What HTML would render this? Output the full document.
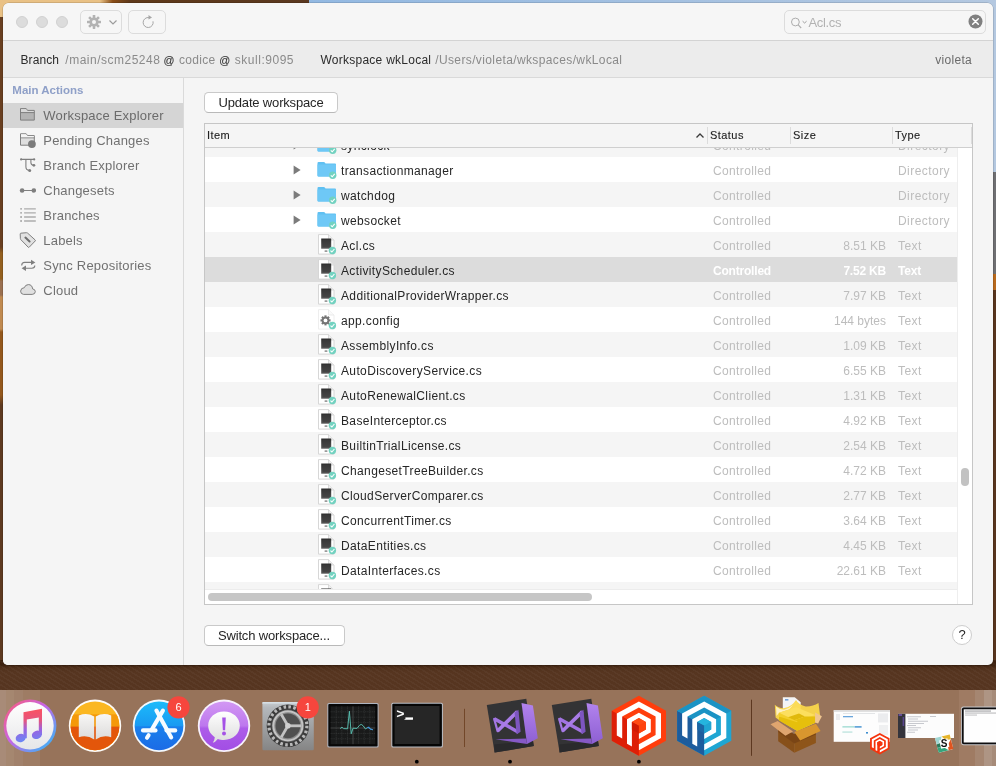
<!DOCTYPE html>
<html lang="en">
<head>
<meta charset="utf-8">
<title>Plastic SCM - Workspace Explorer</title>
<style>
*{box-sizing:border-box;margin:0;padding:0}
html,body{width:996px;height:766px;overflow:hidden}
body{position:relative;background:#5c3b21;font-family:"Liberation Sans",sans-serif;font-size:12px;color:#262626}
.abs{position:absolute}
/* desktop */
#desk div{position:absolute}
/* window */
#win{will-change:transform;position:absolute;left:3px;top:3px;width:990px;height:662px;background:#f5f5f5;border-radius:6px 6px 5px 5px;overflow:hidden;box-shadow:0 0 0 .5px rgba(0,0,0,.22)}
#titlebar{position:absolute;left:0;top:0;width:990px;height:37px;background:#f6f6f6}
#tdiv{position:absolute;left:0;top:37px;width:990px;height:1px;background:#d3d3d3}
#info{position:absolute;left:0;top:38px;width:990px;height:36px;background:#ececec}
#idiv{position:absolute;left:0;top:74px;width:990px;height:1px;background:#d9d9d9}
.tl{position:absolute;top:13px;width:12px;height:12px;border-radius:50%;background:#dcdcdc;border:1px solid #d1d1d1}
.tbtn{position:absolute;top:7px;height:24px;border:1px solid #dcdcdc;border-radius:5px;background:#f6f6f6}
#search{position:absolute;left:781px;top:7px;width:202px;height:24px;border:1px solid #dcdcdc;border-radius:5px;background:#f6f6f6}
#info span{position:absolute;top:0;line-height:38px;font-size:12px;white-space:nowrap}
.dk{color:#2b2b2b}.gy{color:#8a8a8a}.at{color:#3c3c3c;-webkit-text-stroke:.15px #3c3c3c}
/* sidebar */
#side{position:absolute;left:0;top:75px;width:180px;height:587px;background:#f5f5f5}
#sdiv{position:absolute;left:180px;top:75px;width:1px;height:587px;background:#dadada}
#side h4{position:absolute;left:9.3px;top:5px;font-size:11.5px;font-weight:bold;color:#8fa0c8;line-height:14px;letter-spacing:0}
.si{position:absolute;left:0;width:180px;height:25px;line-height:25px;font-size:13px;color:#717171;padding-left:40.3px;white-space:nowrap;letter-spacing:.2px}
.si.sel{background:#d5d5d5;color:#6b6b6b}
.si svg{position:absolute;left:15px;top:4px;width:18px;height:17px}
/* main */
.btn{position:absolute;height:21px;border:1px solid #c9c9c9;border-bottom-color:#b9b9b9;border-radius:4.5px;background:#fff;font-size:13px;line-height:20px;text-align:center;color:#262626;white-space:nowrap;letter-spacing:-.2px}
#table{position:absolute;left:201px;top:120px;width:769px;height:482px;border:1px solid #c6c6c6;background:#fff;overflow:hidden}
#thead{z-index:3;position:absolute;left:0;top:0;width:767px;height:24px;background:#f5f5f5;border-bottom:1px solid #cfcfcf}
#thead span{position:absolute;top:0;line-height:23px;font-size:11px;color:#1e1e1e;letter-spacing:.45px;-webkit-text-stroke:.12px #1e1e1e}
#thead i{position:absolute;top:3px;width:1px;height:17px;background:#dcdcdc}
.row{position:absolute;left:0;width:752px;height:25px;line-height:28px;font-size:12px;white-space:nowrap}
.row.alt{background:#f5f5f5}
.row.sel{background:#dcdcdc}
.row span{position:absolute;top:0;letter-spacing:.36px}
.nm{left:136px;color:#262626}
.st{left:508px;color:#bdbdbd}
.sz{right:71px;color:#bdbdbd;text-align:right;letter-spacing:0 !important}
.ty{left:693px;color:#bdbdbd;letter-spacing:.45px !important}
.row.sel .st,.row.sel .sz,.row.sel .ty{color:#fff;font-weight:bold;letter-spacing:-.2px !important}
.row svg{position:absolute}
.tri{left:88px;top:8px;width:8px;height:10px}
.fold{left:110.5px;top:3px;width:22px;height:20px}
.file{left:111px;top:2px;width:21px;height:21px}
/* dock */
#dock{will-change:transform;position:absolute;left:0;top:690px;width:996px;height:76px;background:#97735a}
#dock>svg{position:absolute;left:0;top:0}
</style>
</head>
<body>
<div id="desk">
  <div style="left:0;top:0;width:112px;height:20px;background:#e9c185"></div>
  <div style="left:100px;top:0;width:212px;height:8px;background:linear-gradient(90deg,#e9c185 0,#8a4e18 6%,#5e3819 14%,#5a3820 100%)"></div>
  <div style="left:309px;top:0;width:687px;height:176px;background:linear-gradient(90deg,#93b9e2,#b4c8e0)"></div>
  <div style="left:0;top:17px;width:10px;height:660px;background:linear-gradient(180deg,#693f20 0,#693f20 230px,#94601f 236px,#94601f 262px,#9a7050 264px,#9a7050 278px,#c08a50 280px,#c08a50 312px,#94581c 315px,#94581c 378px,#5e3a20 388px,#5e3a20 100%)"></div>
  <div style="left:986px;top:172px;width:10px;height:102px;background:#6f6f72"></div>
  <div style="left:986px;top:274px;width:10px;height:16px;background:#b8691d"></div>
  <div style="left:986px;top:290px;width:10px;height:380px;background:#58351e"></div>
  <div style="left:0;top:660px;width:996px;height:30px;background:repeating-linear-gradient(32deg,rgba(255,255,255,.03) 0,rgba(255,255,255,.03) 1.5px,rgba(0,0,0,0) 1.5px,rgba(0,0,0,0) 4px),linear-gradient(180deg,#3c210f 0,#3c210f 5px,#50301b 8px,#563520 12px,#563520 100%)"></div>
</div>

<div id="win">
  <div id="titlebar">
    <div class="tl" style="left:13px"></div><div class="tl" style="left:33px"></div><div class="tl" style="left:53px"></div>
    <div class="tbtn" style="left:77px;width:42px">
      <svg class="abs" style="left:5px;top:3px" width="16" height="16" viewBox="-8 -8 16 16"><g fill="#b3b3b3"><circle r="4.6"/><g id="t"><rect x="-1.3" y="-7" width="2.6" height="14" rx=".4"/><rect x="-7" y="-1.3" width="14" height="2.6" rx=".4"/></g><use href="#t" transform="rotate(45)"/></g><circle r="2" fill="#f6f6f6"/></svg>
      <svg class="abs" style="left:26.5px;top:7.6px" width="10" height="7" viewBox="0 0 10 7"><path d="M1.5 1.5 L5 5 L8.5 1.5" fill="none" stroke="#9c9c9c" stroke-width="1.2"/></svg>
    </div>
    <div class="tbtn" style="left:125px;width:38px">
      <svg class="abs" style="left:9.5px;top:1.6px" width="18" height="18" viewBox="0 0 18 18"><path d="M10.1 4.6 A5 5 0 1 0 14 8.3" fill="none" stroke="#a6a6a6" stroke-width="1"/><path d="M9.5 2 L13 4.5 L9.5 6.4 Z" fill="#a6a6a6"/></svg>
    </div>
    <div id="search">
      <svg class="abs" style="left:4.2px;top:3.6px" width="22" height="16" viewBox="0 0 22 16"><circle cx="6.4" cy="7" r="3.9" fill="none" stroke="#adadad" stroke-width="1"/><path d="M9.2 9.9 L12.2 13" stroke="#adadad" stroke-width="1.1"/><path d="M13.6 6.2 L15.6 8 L17.6 6.2" fill="none" stroke="#9f9f9f" stroke-width="1"/></svg>
      <span class="abs" style="left:23.4px;top:0;line-height:23px;font-size:13px;color:#b2b2b2;letter-spacing:-.3px">Acl.cs</span>
      <svg class="abs" style="left:182.5px;top:3.3px" width="15" height="15" viewBox="0 0 15 15"><circle cx="7.5" cy="7.5" r="7" fill="#808080"/><path d="M4.7 4.7 L10.3 10.3 M10.3 4.7 L4.7 10.3" stroke="#fff" stroke-width="1.5" stroke-linecap="round"/></svg>
    </div>
  </div>
  <div id="tdiv"></div>
  <div id="info">
    <span class="dk" style="left:17.5px;letter-spacing:.07px">Branch</span>
    <span class="gy" style="left:62.3px;letter-spacing:.5px">/main/scm25248</span>
    <span class="at" style="left:160.6px;font-size:10.8px">@</span>
    <span class="gy" style="left:176px;letter-spacing:.28px">codice</span>
    <span class="at" style="left:216.3px;font-size:10.8px">@</span>
    <span class="gy" style="left:231.8px;letter-spacing:.52px">skull:9095</span>
    <span class="dk" style="left:317.4px;letter-spacing:.26px">Workspace wkLocal</span>
    <span class="gy" style="left:432.2px;letter-spacing:.38px">/Users/violeta/wkspaces/wkLocal</span>
    <span style="left:932.3px;color:#6b6b6b;letter-spacing:.3px">violeta</span>
  </div>
  <div id="idiv"></div>

  <div id="side">
    <h4>Main Actions</h4>
    <div class="si sel" style="top:25px"><svg viewBox="0 0 18 17"><path d="M2.5 13.1 V1.6 H8.2 L9.6 3.4 H16.3 V13.1 Z" fill="#b3b3b3" stroke="#7f7f7f" stroke-width="1" stroke-linejoin="round"/><path d="M2.5 5.6 H16.3" stroke="#7f7f7f" stroke-width="1"/><path d="M3 2.1 H8 L9.4 3.9 H15.8 V5.1 H3 Z" fill="#f5f5f5" opacity=".55"/></svg>Workspace Explorer</div>
    <div class="si" style="top:50px"><svg viewBox="0 0 18 17"><path d="M2.5 13.2 V1.8 H8.2 L9.6 3.6 H16.3 V13.2 Z" fill="#dedede" stroke="#7f7f7f" stroke-width="1" stroke-linejoin="round"/><path d="M2.5 5.8 H16.3" stroke="#7f7f7f" stroke-width="1"/><path d="M3 2.3 H8 L9.4 4.1 H15.8 V5.3 H3 Z" fill="#f5f5f5"/><circle cx="13.9" cy="12.1" r="3.9" fill="#7b7b7b"/></svg>Pending Changes</div>
    <div class="si" style="top:75px"><svg viewBox="0 0 18 17"><g fill="none" stroke="#7f7f7f" stroke-width="1.1"><path d="M3.1 2.4 H16.2"/><path d="M7.9 2.4 V9.8 Q7.9 13.2 11.2 13.4"/><path d="M12.9 2.4 V5.6 Q12.9 8.1 15.4 8.3"/></g><g fill="#7f7f7f"><circle cx="3.1" cy="2.4" r="1.1"/><circle cx="16.2" cy="2.4" r="1.1"/><circle cx="11.7" cy="13.5" r="1.5"/><circle cx="15.9" cy="8.3" r="1.4"/></g></svg>Branch Explorer</div>
    <div class="si" style="top:100px"><svg viewBox="0 0 18 17"><path d="M4 8.5 H15.8" stroke="#7f7f7f" stroke-width="1.2"/><circle cx="4.1" cy="8.5" r="2.3" fill="#7f7f7f"/><circle cx="15.8" cy="8.5" r="2.3" fill="#7f7f7f"/></svg>Changesets</div>
    <div class="si" style="top:125px"><svg viewBox="0 0 18 17"><g stroke="#ababab" stroke-width="1.4"><path d="M6.1 1.9 H17.8"/><path d="M2.2 1.9 H4" stroke="#9c9c9c"/><path d="M6.1 5.9 H17.8"/><path d="M2.2 5.9 H4" stroke="#9c9c9c"/><path d="M6.1 10 H17.8"/><path d="M2.2 10 H4" stroke="#9c9c9c"/><path d="M6.1 14 H17.8"/><path d="M2.2 14 H4" stroke="#9c9c9c"/></g></svg>Branches</div>
    <div class="si" style="top:150px"><svg viewBox="0 0 18 17"><path d="M2.2 2 Q2.2 1.3 2.9 1.2 L8.6 0.7 Q9.2 0.7 9.7 1.2 L17.2 8 Q17.7 8.5 17.2 9 L11.2 15.2 Q10.7 15.7 10.2 15.2 L2.9 7.7 Q2.4 7.2 2.4 6.6 Z" fill="#e2e2e2" stroke="#7f7f7f" stroke-width="1" stroke-linejoin="round"/><path d="M7.4 5.6 L11.6 9.5" stroke="#6e6e6e" stroke-width="2" stroke-linecap="round"/></svg>Labels</div>
    <div class="si" style="top:175px"><svg viewBox="0 0 18 17"><g fill="none" stroke="#7f7f7f" stroke-width="1.1"><path d="M3.7 8.4 Q3.7 5.4 6.7 5.4 H14.5"/><path d="M16.8 8.6 Q16.8 11.3 13.8 11.3 H6.5"/></g><path d="M13 2.7 L17.4 5.4 L13 8.1 Z" fill="#7f7f7f"/><path d="M8 8.6 L3.6 11.3 L8 14 Z" fill="#7f7f7f"/></svg>Sync Repositories</div>
    <div class="si" style="top:200px"><svg viewBox="0 0 18 17"><path d="M5.6 12.4 H14.2 Q17.4 12.2 17.3 9.5 Q17.1 7.2 14.6 6.9 Q14.2 2.6 10.3 2.6 Q7.2 2.7 6.3 5.7 Q2.9 5.8 2.6 9.1 Q2.6 12.2 5.6 12.4 Z" fill="#e0e0e0" stroke="#7f7f7f" stroke-width="1"/></svg>Cloud</div>
  </div>
  <div id="sdiv"></div>

  <div class="btn" style="left:201px;top:89px;width:134px;letter-spacing:-.17px">Update workspace</div>

  <div id="table">
    <div id="thead">
      <span style="left:2px">Item</span>
      <svg class="abs" style="left:490px;top:8px" width="10" height="7" viewBox="0 0 10 7"><path d="M1.5 5.5 L5 2 L8.5 5.5" fill="none" stroke="#3a3a3a" stroke-width="1.3"/></svg>
      <i style="left:502px"></i><span style="left:505px">Status</span>
      <i style="left:585px"></i><span style="left:588px">Size</span>
      <i style="left:687px"></i><span style="left:690px">Type</span>
      <i style="left:766px"></i>
    </div>
    <div class="abs" style="left:0;top:0;width:767px;height:465px;overflow:hidden"><div class="row alt" style="top:8px"><svg class="tri" viewBox="0 0 8 10"><path d="M0.6 0.5 L7.6 5 L0.6 9.5 Z" fill="#7b7b7b"/></svg><svg class="fold" viewBox="0 0 22 20"><path d="M1.5 2.9 Q1.5 1.9 2.5 1.9 H7.6 Q8.4 1.9 8.9 2.6 L9.5 3.4 H19 Q20 3.4 20 4.4 V15.6 Q20 16.6 19 16.6 H2.5 Q1.5 16.6 1.5 15.6 Z" fill="#5fc0f2"/><path d="M1.5 4.6 H20 V15.6 Q20 16.6 19 16.6 H2.5 Q1.5 16.6 1.5 15.6 Z" fill="#6ec8f6"/><circle cx="16.7" cy="15.3" r="3.7" fill="#72d2c0"/><path d="M14.799999999999999 15.4 L16.2 16.8 L18.7 13.8" fill="none" stroke="#fff" stroke-width="1.1"/></svg><span class="nm">synclock</span><span class="st">Controlled</span><span class="ty">Directory</span></div>
      <div class="row " style="top:33px"><svg class="tri" viewBox="0 0 8 10"><path d="M0.6 0.5 L7.6 5 L0.6 9.5 Z" fill="#7b7b7b"/></svg><svg class="fold" viewBox="0 0 22 20"><path d="M1.5 2.9 Q1.5 1.9 2.5 1.9 H7.6 Q8.4 1.9 8.9 2.6 L9.5 3.4 H19 Q20 3.4 20 4.4 V15.6 Q20 16.6 19 16.6 H2.5 Q1.5 16.6 1.5 15.6 Z" fill="#5fc0f2"/><path d="M1.5 4.6 H20 V15.6 Q20 16.6 19 16.6 H2.5 Q1.5 16.6 1.5 15.6 Z" fill="#6ec8f6"/><circle cx="16.7" cy="15.3" r="3.7" fill="#72d2c0"/><path d="M14.799999999999999 15.4 L16.2 16.8 L18.7 13.8" fill="none" stroke="#fff" stroke-width="1.1"/></svg><span class="nm">transactionmanager</span><span class="st">Controlled</span><span class="ty">Directory</span></div>
      <div class="row alt" style="top:58px"><svg class="tri" viewBox="0 0 8 10"><path d="M0.6 0.5 L7.6 5 L0.6 9.5 Z" fill="#7b7b7b"/></svg><svg class="fold" viewBox="0 0 22 20"><path d="M1.5 2.9 Q1.5 1.9 2.5 1.9 H7.6 Q8.4 1.9 8.9 2.6 L9.5 3.4 H19 Q20 3.4 20 4.4 V15.6 Q20 16.6 19 16.6 H2.5 Q1.5 16.6 1.5 15.6 Z" fill="#5fc0f2"/><path d="M1.5 4.6 H20 V15.6 Q20 16.6 19 16.6 H2.5 Q1.5 16.6 1.5 15.6 Z" fill="#6ec8f6"/><circle cx="16.7" cy="15.3" r="3.7" fill="#72d2c0"/><path d="M14.799999999999999 15.4 L16.2 16.8 L18.7 13.8" fill="none" stroke="#fff" stroke-width="1.1"/></svg><span class="nm">watchdog</span><span class="st">Controlled</span><span class="ty">Directory</span></div>
      <div class="row " style="top:83px"><svg class="tri" viewBox="0 0 8 10"><path d="M0.6 0.5 L7.6 5 L0.6 9.5 Z" fill="#7b7b7b"/></svg><svg class="fold" viewBox="0 0 22 20"><path d="M1.5 2.9 Q1.5 1.9 2.5 1.9 H7.6 Q8.4 1.9 8.9 2.6 L9.5 3.4 H19 Q20 3.4 20 4.4 V15.6 Q20 16.6 19 16.6 H2.5 Q1.5 16.6 1.5 15.6 Z" fill="#5fc0f2"/><path d="M1.5 4.6 H20 V15.6 Q20 16.6 19 16.6 H2.5 Q1.5 16.6 1.5 15.6 Z" fill="#6ec8f6"/><circle cx="16.7" cy="15.3" r="3.7" fill="#72d2c0"/><path d="M14.799999999999999 15.4 L16.2 16.8 L18.7 13.8" fill="none" stroke="#fff" stroke-width="1.1"/></svg><span class="nm">websocket</span><span class="st">Controlled</span><span class="ty">Directory</span></div>
      <div class="row alt" style="top:108px"><svg class="file" viewBox="0 0 21 21"><defs><linearGradient id="sq" x1="0" y1="0" x2="0" y2="1"><stop offset="0" stop-color="#2e2e2e"/><stop offset="1" stop-color="#5a5a5a"/></linearGradient></defs><path d="M2.5 0.6 H12.5 L18 6 V20.1 H2.5 Z" fill="#fff" stroke="#d2d2d2" stroke-width=".9"/><path d="M12.5 0.6 V6 H18" fill="#f0f0f0" stroke="#d2d2d2" stroke-width=".8"/><rect x="5.2" y="4.5" width="10" height="10.2" fill="url(#sq)"/><rect x="6.6" y="5.8" width="7.2" height="7.4" fill="#3c3c3c" opacity=".6"/><rect x="8.5" y="16.3" width="3" height="1.6" rx=".6" fill="#9a9a9a"/><circle cx="16.4" cy="16.5" r="3.7" fill="#72d2c0"/><path d="M14.499999999999998 16.6 L15.899999999999999 18.0 L18.4 15.0" fill="none" stroke="#fff" stroke-width="1.1"/></svg><span class="nm">Acl.cs</span><span class="st">Controlled</span><span class="sz">8.51 KB</span><span class="ty">Text</span></div>
      <div class="row sel" style="top:133px"><svg class="file" viewBox="0 0 21 21"><path d="M2.5 0.6 H12.5 L18 6 V20.1 H2.5 Z" fill="#fff" stroke="#d2d2d2" stroke-width=".9"/><path d="M12.5 0.6 V6 H18" fill="#f0f0f0" stroke="#d2d2d2" stroke-width=".8"/><rect x="5.2" y="4.5" width="10" height="10.2" fill="url(#sq)"/><rect x="6.6" y="5.8" width="7.2" height="7.4" fill="#3c3c3c" opacity=".6"/><rect x="8.5" y="16.3" width="3" height="1.6" rx=".6" fill="#9a9a9a"/><circle cx="16.4" cy="16.5" r="3.7" fill="#72d2c0"/><path d="M14.499999999999998 16.6 L15.899999999999999 18.0 L18.4 15.0" fill="none" stroke="#fff" stroke-width="1.1"/></svg><span class="nm">ActivityScheduler.cs</span><span class="st">Controlled</span><span class="sz">7.52 KB</span><span class="ty">Text</span></div>
      <div class="row alt" style="top:158px"><svg class="file" viewBox="0 0 21 21"><path d="M2.5 0.6 H12.5 L18 6 V20.1 H2.5 Z" fill="#fff" stroke="#d2d2d2" stroke-width=".9"/><path d="M12.5 0.6 V6 H18" fill="#f0f0f0" stroke="#d2d2d2" stroke-width=".8"/><rect x="5.2" y="4.5" width="10" height="10.2" fill="url(#sq)"/><rect x="6.6" y="5.8" width="7.2" height="7.4" fill="#3c3c3c" opacity=".6"/><rect x="8.5" y="16.3" width="3" height="1.6" rx=".6" fill="#9a9a9a"/><circle cx="16.4" cy="16.5" r="3.7" fill="#72d2c0"/><path d="M14.499999999999998 16.6 L15.899999999999999 18.0 L18.4 15.0" fill="none" stroke="#fff" stroke-width="1.1"/></svg><span class="nm">AdditionalProviderWrapper.cs</span><span class="st">Controlled</span><span class="sz">7.97 KB</span><span class="ty">Text</span></div>
      <div class="row " style="top:183px"><svg class="file" viewBox="0 0 21 21"><path d="M2.5 0.6 H12.5 L18 6 V20.1 H2.5 Z" fill="#fff" stroke="#ececec" stroke-width=".9"/><path d="M12.5 0.6 V6 H18" fill="#fafafa" stroke="#e6e6e6" stroke-width=".8"/><g transform="translate(9.5 11.4)"><g fill="#757575"><circle r="3.7"/><g id="g2"><rect x="-1.1" y="-5" width="2.2" height="10"/><rect x="-5" y="-1.1" width="10" height="2.2"/></g><use href="#g2" transform="rotate(45)"/></g><circle r="1.9" fill="#fff"/></g><circle cx="16.4" cy="16.5" r="3.7" fill="#72d2c0"/><path d="M14.499999999999998 16.6 L15.899999999999999 18.0 L18.4 15.0" fill="none" stroke="#fff" stroke-width="1.1"/></svg><span class="nm">app.config</span><span class="st">Controlled</span><span class="sz">144 bytes</span><span class="ty">Text</span></div>
      <div class="row alt" style="top:208px"><svg class="file" viewBox="0 0 21 21"><path d="M2.5 0.6 H12.5 L18 6 V20.1 H2.5 Z" fill="#fff" stroke="#d2d2d2" stroke-width=".9"/><path d="M12.5 0.6 V6 H18" fill="#f0f0f0" stroke="#d2d2d2" stroke-width=".8"/><rect x="5.2" y="4.5" width="10" height="10.2" fill="url(#sq)"/><rect x="6.6" y="5.8" width="7.2" height="7.4" fill="#3c3c3c" opacity=".6"/><rect x="8.5" y="16.3" width="3" height="1.6" rx=".6" fill="#9a9a9a"/><circle cx="16.4" cy="16.5" r="3.7" fill="#72d2c0"/><path d="M14.499999999999998 16.6 L15.899999999999999 18.0 L18.4 15.0" fill="none" stroke="#fff" stroke-width="1.1"/></svg><span class="nm">AssemblyInfo.cs</span><span class="st">Controlled</span><span class="sz">1.09 KB</span><span class="ty">Text</span></div>
      <div class="row " style="top:233px"><svg class="file" viewBox="0 0 21 21"><path d="M2.5 0.6 H12.5 L18 6 V20.1 H2.5 Z" fill="#fff" stroke="#d2d2d2" stroke-width=".9"/><path d="M12.5 0.6 V6 H18" fill="#f0f0f0" stroke="#d2d2d2" stroke-width=".8"/><rect x="5.2" y="4.5" width="10" height="10.2" fill="url(#sq)"/><rect x="6.6" y="5.8" width="7.2" height="7.4" fill="#3c3c3c" opacity=".6"/><rect x="8.5" y="16.3" width="3" height="1.6" rx=".6" fill="#9a9a9a"/><circle cx="16.4" cy="16.5" r="3.7" fill="#72d2c0"/><path d="M14.499999999999998 16.6 L15.899999999999999 18.0 L18.4 15.0" fill="none" stroke="#fff" stroke-width="1.1"/></svg><span class="nm">AutoDiscoveryService.cs</span><span class="st">Controlled</span><span class="sz">6.55 KB</span><span class="ty">Text</span></div>
      <div class="row alt" style="top:258px"><svg class="file" viewBox="0 0 21 21"><path d="M2.5 0.6 H12.5 L18 6 V20.1 H2.5 Z" fill="#fff" stroke="#d2d2d2" stroke-width=".9"/><path d="M12.5 0.6 V6 H18" fill="#f0f0f0" stroke="#d2d2d2" stroke-width=".8"/><rect x="5.2" y="4.5" width="10" height="10.2" fill="url(#sq)"/><rect x="6.6" y="5.8" width="7.2" height="7.4" fill="#3c3c3c" opacity=".6"/><rect x="8.5" y="16.3" width="3" height="1.6" rx=".6" fill="#9a9a9a"/><circle cx="16.4" cy="16.5" r="3.7" fill="#72d2c0"/><path d="M14.499999999999998 16.6 L15.899999999999999 18.0 L18.4 15.0" fill="none" stroke="#fff" stroke-width="1.1"/></svg><span class="nm">AutoRenewalClient.cs</span><span class="st">Controlled</span><span class="sz">1.31 KB</span><span class="ty">Text</span></div>
      <div class="row " style="top:283px"><svg class="file" viewBox="0 0 21 21"><path d="M2.5 0.6 H12.5 L18 6 V20.1 H2.5 Z" fill="#fff" stroke="#d2d2d2" stroke-width=".9"/><path d="M12.5 0.6 V6 H18" fill="#f0f0f0" stroke="#d2d2d2" stroke-width=".8"/><rect x="5.2" y="4.5" width="10" height="10.2" fill="url(#sq)"/><rect x="6.6" y="5.8" width="7.2" height="7.4" fill="#3c3c3c" opacity=".6"/><rect x="8.5" y="16.3" width="3" height="1.6" rx=".6" fill="#9a9a9a"/><circle cx="16.4" cy="16.5" r="3.7" fill="#72d2c0"/><path d="M14.499999999999998 16.6 L15.899999999999999 18.0 L18.4 15.0" fill="none" stroke="#fff" stroke-width="1.1"/></svg><span class="nm">BaseInterceptor.cs</span><span class="st">Controlled</span><span class="sz">4.92 KB</span><span class="ty">Text</span></div>
      <div class="row alt" style="top:308px"><svg class="file" viewBox="0 0 21 21"><path d="M2.5 0.6 H12.5 L18 6 V20.1 H2.5 Z" fill="#fff" stroke="#d2d2d2" stroke-width=".9"/><path d="M12.5 0.6 V6 H18" fill="#f0f0f0" stroke="#d2d2d2" stroke-width=".8"/><rect x="5.2" y="4.5" width="10" height="10.2" fill="url(#sq)"/><rect x="6.6" y="5.8" width="7.2" height="7.4" fill="#3c3c3c" opacity=".6"/><rect x="8.5" y="16.3" width="3" height="1.6" rx=".6" fill="#9a9a9a"/><circle cx="16.4" cy="16.5" r="3.7" fill="#72d2c0"/><path d="M14.499999999999998 16.6 L15.899999999999999 18.0 L18.4 15.0" fill="none" stroke="#fff" stroke-width="1.1"/></svg><span class="nm">BuiltinTrialLicense.cs</span><span class="st">Controlled</span><span class="sz">2.54 KB</span><span class="ty">Text</span></div>
      <div class="row " style="top:333px"><svg class="file" viewBox="0 0 21 21"><path d="M2.5 0.6 H12.5 L18 6 V20.1 H2.5 Z" fill="#fff" stroke="#d2d2d2" stroke-width=".9"/><path d="M12.5 0.6 V6 H18" fill="#f0f0f0" stroke="#d2d2d2" stroke-width=".8"/><rect x="5.2" y="4.5" width="10" height="10.2" fill="url(#sq)"/><rect x="6.6" y="5.8" width="7.2" height="7.4" fill="#3c3c3c" opacity=".6"/><rect x="8.5" y="16.3" width="3" height="1.6" rx=".6" fill="#9a9a9a"/><circle cx="16.4" cy="16.5" r="3.7" fill="#72d2c0"/><path d="M14.499999999999998 16.6 L15.899999999999999 18.0 L18.4 15.0" fill="none" stroke="#fff" stroke-width="1.1"/></svg><span class="nm">ChangesetTreeBuilder.cs</span><span class="st">Controlled</span><span class="sz">4.72 KB</span><span class="ty">Text</span></div>
      <div class="row alt" style="top:358px"><svg class="file" viewBox="0 0 21 21"><path d="M2.5 0.6 H12.5 L18 6 V20.1 H2.5 Z" fill="#fff" stroke="#d2d2d2" stroke-width=".9"/><path d="M12.5 0.6 V6 H18" fill="#f0f0f0" stroke="#d2d2d2" stroke-width=".8"/><rect x="5.2" y="4.5" width="10" height="10.2" fill="url(#sq)"/><rect x="6.6" y="5.8" width="7.2" height="7.4" fill="#3c3c3c" opacity=".6"/><rect x="8.5" y="16.3" width="3" height="1.6" rx=".6" fill="#9a9a9a"/><circle cx="16.4" cy="16.5" r="3.7" fill="#72d2c0"/><path d="M14.499999999999998 16.6 L15.899999999999999 18.0 L18.4 15.0" fill="none" stroke="#fff" stroke-width="1.1"/></svg><span class="nm">CloudServerComparer.cs</span><span class="st">Controlled</span><span class="sz">2.77 KB</span><span class="ty">Text</span></div>
      <div class="row " style="top:383px"><svg class="file" viewBox="0 0 21 21"><path d="M2.5 0.6 H12.5 L18 6 V20.1 H2.5 Z" fill="#fff" stroke="#d2d2d2" stroke-width=".9"/><path d="M12.5 0.6 V6 H18" fill="#f0f0f0" stroke="#d2d2d2" stroke-width=".8"/><rect x="5.2" y="4.5" width="10" height="10.2" fill="url(#sq)"/><rect x="6.6" y="5.8" width="7.2" height="7.4" fill="#3c3c3c" opacity=".6"/><rect x="8.5" y="16.3" width="3" height="1.6" rx=".6" fill="#9a9a9a"/><circle cx="16.4" cy="16.5" r="3.7" fill="#72d2c0"/><path d="M14.499999999999998 16.6 L15.899999999999999 18.0 L18.4 15.0" fill="none" stroke="#fff" stroke-width="1.1"/></svg><span class="nm">ConcurrentTimer.cs</span><span class="st">Controlled</span><span class="sz">3.64 KB</span><span class="ty">Text</span></div>
      <div class="row alt" style="top:408px"><svg class="file" viewBox="0 0 21 21"><path d="M2.5 0.6 H12.5 L18 6 V20.1 H2.5 Z" fill="#fff" stroke="#d2d2d2" stroke-width=".9"/><path d="M12.5 0.6 V6 H18" fill="#f0f0f0" stroke="#d2d2d2" stroke-width=".8"/><rect x="5.2" y="4.5" width="10" height="10.2" fill="url(#sq)"/><rect x="6.6" y="5.8" width="7.2" height="7.4" fill="#3c3c3c" opacity=".6"/><rect x="8.5" y="16.3" width="3" height="1.6" rx=".6" fill="#9a9a9a"/><circle cx="16.4" cy="16.5" r="3.7" fill="#72d2c0"/><path d="M14.499999999999998 16.6 L15.899999999999999 18.0 L18.4 15.0" fill="none" stroke="#fff" stroke-width="1.1"/></svg><span class="nm">DataEntities.cs</span><span class="st">Controlled</span><span class="sz">4.45 KB</span><span class="ty">Text</span></div>
      <div class="row " style="top:433px"><svg class="file" viewBox="0 0 21 21"><path d="M2.5 0.6 H12.5 L18 6 V20.1 H2.5 Z" fill="#fff" stroke="#d2d2d2" stroke-width=".9"/><path d="M12.5 0.6 V6 H18" fill="#f0f0f0" stroke="#d2d2d2" stroke-width=".8"/><rect x="5.2" y="4.5" width="10" height="10.2" fill="url(#sq)"/><rect x="6.6" y="5.8" width="7.2" height="7.4" fill="#3c3c3c" opacity=".6"/><rect x="8.5" y="16.3" width="3" height="1.6" rx=".6" fill="#9a9a9a"/><circle cx="16.4" cy="16.5" r="3.7" fill="#72d2c0"/><path d="M14.499999999999998 16.6 L15.899999999999999 18.0 L18.4 15.0" fill="none" stroke="#fff" stroke-width="1.1"/></svg><span class="nm">DataInterfaces.cs</span><span class="st">Controlled</span><span class="sz">22.61 KB</span><span class="ty">Text</span></div>
      <div class="row alt" style="top:458px"><svg class="file" viewBox="0 0 21 21"><path d="M2.5 0.6 H12.5 L18 6 V20.1 H2.5 Z" fill="#fff" stroke="#d2d2d2" stroke-width=".9"/><path d="M12.5 0.6 V6 H18" fill="#f0f0f0" stroke="#d2d2d2" stroke-width=".8"/><rect x="5.2" y="4.5" width="10" height="10.2" fill="url(#sq)"/><rect x="6.6" y="5.8" width="7.2" height="7.4" fill="#3c3c3c" opacity=".6"/><rect x="8.5" y="16.3" width="3" height="1.6" rx=".6" fill="#9a9a9a"/><circle cx="16.4" cy="16.5" r="3.7" fill="#72d2c0"/><path d="M14.499999999999998 16.6 L15.899999999999999 18.0 L18.4 15.0" fill="none" stroke="#fff" stroke-width="1.1"/></svg><span class="nm">DataObjects.cs</span><span class="st">Controlled</span><span class="sz">3.10 KB</span><span class="ty">Text</span></div></div>
    <div class="abs" style="left:0;top:465px;width:767px;height:15px;background:#fff;border-top:1px solid #ececec"></div>
    <div class="abs" style="left:752px;top:24px;width:15px;height:456px;background:#fff;border-left:1px solid #eeeeee"></div>
    <div class="abs" style="left:3px;top:469px;width:384px;height:8px;border-radius:4px;background:#c6c6c6"></div>
    <div class="abs" style="left:756px;top:344px;width:8px;height:18px;border-radius:4px;background:#c2c2c2"></div>
  </div>

  <div class="btn" style="left:201px;top:622px;width:141px;letter-spacing:-.15px;padding-right:1.2px">Switch workspace...</div>
  <div class="abs" style="left:949px;top:622px;width:20px;height:20px;border-radius:50%;background:#fff;border:1px solid #cdcdcd;font-size:13px;line-height:18px;text-align:center;color:#262626">?</div>
</div>

<div id="dock">
<svg width="996" height="76" viewBox="0 0 996 76" font-family="Liberation Sans, sans-serif">
<defs>
  <linearGradient id="itr" x1="0" y1="0" x2="1" y2="1"><stop offset="0" stop-color="#ff5b6e"/><stop offset=".45" stop-color="#c765e6"/><stop offset="1" stop-color="#1fc3fa"/></linearGradient>
  <linearGradient id="itd" x1="0" y1="0" x2="0" y2="1"><stop offset="0" stop-color="#ffffff"/><stop offset="1" stop-color="#e6e6e8"/></linearGradient>
  <linearGradient id="itn" gradientUnits="userSpaceOnUse" x1="30" y1="19" x2="30" y2="52"><stop offset="0" stop-color="#fb5160"/><stop offset=".35" stop-color="#e4557f"/><stop offset=".62" stop-color="#9b62e0"/><stop offset="1" stop-color="#6a86f5"/></linearGradient>
  <linearGradient id="asb" x1="0" y1="0" x2="0" y2="1"><stop offset="0" stop-color="#1cbbfa"/><stop offset=".5" stop-color="#199af2"/><stop offset=".52" stop-color="#1a80ec"/><stop offset="1" stop-color="#1c6be6"/></linearGradient>
  <linearGradient id="fbp" x1="0" y1="0" x2="0" y2="1"><stop offset="0" stop-color="#d298f3"/><stop offset=".5" stop-color="#bd77ee"/><stop offset=".55" stop-color="#ad5ce9"/><stop offset="1" stop-color="#a24ee4"/></linearGradient>
  <linearGradient id="fbb" x1="0" y1="0" x2="0" y2="1"><stop offset="0" stop-color="#ffffff"/><stop offset="1" stop-color="#dcdcdc"/></linearGradient>
  <linearGradient id="spg" x1="0" y1="0" x2="0" y2="1"><stop offset="0" stop-color="#c7ccd1"/><stop offset=".12" stop-color="#b4b8bc"/><stop offset="1" stop-color="#858585"/></linearGradient>
  <linearGradient id="vsp" x1="0" y1="0" x2="0" y2="1"><stop offset="0" stop-color="#b283ee"/><stop offset="1" stop-color="#8d5fd2"/></linearGradient>
  <linearGradient id="bkp" x1="0" y1="0" x2="0" y2="1"><stop offset="0" stop-color="#f7f6f5"/><stop offset="1" stop-color="#dcdbda"/></linearGradient>
  <clipPath id="bkc"><circle cx="95" cy="35.8" r="24.4"/></clipPath>
</defs>
<!-- dock background bands -->
<rect x="0" y="0" width="6" height="76" fill="#a88b78"/><rect x="6" y="0" width="8" height="76" fill="#a58770"/><rect x="14" y="0" width="9" height="76" fill="#a1816b"/><rect x="23" y="0" width="17" height="76" fill="#9e7c64"/>
<rect x="959" y="0" width="16" height="76" fill="#9f7b63"/><rect x="975" y="0" width="9" height="76" fill="#a58671"/><rect x="984" y="0" width="8" height="76" fill="#ae9584"/><rect x="992" y="0" width="4" height="76" fill="#a68b79"/>

<!-- iTunes -->
<circle cx="30" cy="35.8" r="26.4" fill="url(#itr)"/>
<circle cx="30" cy="35.8" r="23.7" fill="url(#itd)"/>
<g fill="url(#itn)"><path d="M23.5 22.3 L42 18.8 V45 H38.8 V27.4 L26.8 29.6 V48.2 H23.5 Z"/><ellipse cx="20.7" cy="48" rx="5.1" ry="4.1" transform="rotate(-18 20.7 48)"/><ellipse cx="36.9" cy="44.8" rx="5.1" ry="4.1" transform="rotate(-18 36.9 44.8)"/></g>

<!-- Books -->
<circle cx="95" cy="35.8" r="26.2" fill="#fdfbf8"/>
<g clip-path="url(#bkc)"><rect x="68" y="9" width="54" height="54" fill="#fbb721"/><rect x="68" y="24.4" width="54" height="40" fill="#f4990a"/><rect x="68" y="36.6" width="54" height="30" fill="#e3560a"/></g>
<path d="M78.8 25.4 Q87 22.4 94.2 26.4 V49.4 Q87 44.6 78.8 47.2 Z" fill="url(#bkp)"/><path d="M95.8 26.4 Q103 22.4 111.2 25.4 V47.2 Q103 44.6 95.8 49.4 Z" fill="url(#bkp)"/>


<!-- App Store -->
<circle cx="159" cy="35.8" r="26.2" fill="#f4f9fd"/>
<circle cx="159" cy="35.8" r="24.4" fill="url(#asb)"/>
<g stroke="#f7fbff" stroke-width="4.1" stroke-linecap="round" fill="none"><path d="M162.9 20.6 L151.4 40.2"/><path d="M148.6 45.2 L147 47.8"/><path d="M156.4 20.6 L171.2 47.4"/><path d="M143 40.4 H155.5"/><path d="M166.5 40.4 H175.2"/></g>
<circle cx="178.5" cy="17.3" r="11.1" fill="#f6463d"/>
<text x="178.5" y="21.2" font-size="11" fill="#fff" text-anchor="middle">6</text>

<!-- Feedback -->
<circle cx="224" cy="35.8" r="26.2" fill="#f8f2fc"/>
<circle cx="224" cy="35.8" r="24.4" fill="url(#fbp)"/>
<path d="M224 21.4 C233 21.4 239.8 27.6 239.8 35.6 C239.8 43.8 233 50 224 50 C221.6 50 219.6 49.6 217.8 48.9 Q215.4 52 212.8 52.8 Q214.6 50.4 214.8 47.2 C210.6 44.6 208.2 40.4 208.2 35.6 C208.2 27.6 215 21.4 224 21.4 Z" fill="url(#fbb)"/>
<path d="M222.2 27.4 H225.8 L225.1 40.2 H222.9 Z" fill="#a552e6"/><circle cx="224" cy="43.6" r="2" fill="#a552e6"/>

<!-- System Preferences -->
<rect x="262.4" y="12" width="51.4" height="48.2" rx="1.2" fill="url(#spg)"/>
<rect x="262.4" y="12" width="51.4" height="1.6" fill="#d9e3ea" opacity=".8"/>
<g transform="translate(287.9 35.8)">
  <circle r="21.2" fill="#3a3a3a"/>
  <circle r="19" fill="none" stroke="#b9b9b9" stroke-width="3.2" stroke-dasharray="2.6 2.37"/>
  <circle r="16.4" fill="#555"/><circle r="15.6" fill="#c4c4c4"/><circle r="13.6" fill="#8a8a8a"/><circle r="12.4" fill="#505050"/>
  <g stroke="#c2c2c2" stroke-width="2.8"><path d="M0 0 L13.4 0"/><path d="M0 0 L-6.7 -11.6"/><path d="M0 0 L-6.7 11.6"/></g>
  <circle r="2.8" fill="#cfcfcf"/>
</g>
<circle cx="307.7" cy="17.3" r="11.1" fill="#f6463d"/>
<text x="307.7" y="21.2" font-size="11" fill="#fff" text-anchor="middle">1</text>

<!-- Activity Monitor -->
<rect x="327.3" y="13" width="51.3" height="44.6" rx="1.5" fill="#aeb4bf"/>
<rect x="328.3" y="14" width="49.3" height="42.6" rx="1" fill="#070707"/>
<rect x="330.6" y="16.4" width="44.7" height="37.8" fill="#191a1a"/>
<g stroke="#3a3c3c" stroke-width=".6" stroke-dasharray="1.2 .6"><path d="M336.2 16.4V54.2M341.8 16.4V54.2M347.4 16.4V54.2M358.6 16.4V54.2M364.2 16.4V54.2M369.8 16.4V54.2M330.6 21.8H375.3M330.6 27.2H375.3M330.6 32.6H375.3M330.6 43.4H375.3M330.6 48.8H375.3"/></g>
<g stroke="#555757" stroke-width=".7"><path d="M353 16.4V54.2M330.6 38H375.3"/></g>
<polyline points="340.1,38.6 342,37.2 343.5,38.6 347.6,38.8 349.4,21.2 351.2,43.8 353,38.2 357,38.4 359.4,35.4 361.2,34.4 363,35.6 365.5,39 367.4,37.6 368.6,37.4 370.4,39 372.8,39.8" fill="none" stroke="#58bfb0" stroke-width=".95"/>
<polyline points="367.4,37.6 368.6,37.4 370.4,39 372.8,39.8" fill="none" stroke="#3f8fe0" stroke-width="1.1"/>

<!-- Terminal -->
<rect x="391.3" y="12.7" width="51.6" height="44.7" rx="1.5" fill="#b9bec6"/>
<rect x="392.3" y="13.7" width="49.6" height="42.7" rx="1" fill="#050505"/>
<rect x="394.6" y="16" width="45" height="38" fill="#262626"/>
<text x="396.2" y="28.2" font-family="Liberation Mono, monospace" font-weight="bold" font-size="13.5" fill="#fff" textLength="16.6" lengthAdjust="spacingAndGlyphs">&gt;_</text>
<rect x="405.4" y="27.4" width="7.6" height="2" fill="#fff"/>
<circle cx="416.8" cy="71.7" r="1.9" fill="#000"/>

<rect x="464" y="18.8" width=".9" height="38.2" fill="#6f4224"/>

<!-- Visual Studio x2 -->
<g id="vs">
  <path d="M486.8 14.9 L526.3 8.7 L533.8 56.1 L494.6 62.6 Z" fill="#333335"/>
  <path d="M494.2 54.6 L533 50.8 L533.8 56.1 L494.6 62.6 Z" fill="#2a2a2c"/>
  <path d="M521.5 13 L532.9 15.6 L537.8 48.2 L527 54.1 Z" fill="url(#vsp)"/>
  <path d="M495.4 49.3 L526.3 48.6 L527 54.1 Z" fill="#8659c6"/>
  <path d="M494.2 28.9 L497.6 41.2 L503.4 34.4 Z" fill="none" stroke="#a477e4" stroke-width="2.2" stroke-linejoin="round"/>
  <path d="M494.3 28.8 L518.6 42.2" stroke="#a274e2" stroke-width="3.4"/>
  <path d="M497.5 41 L517.4 21.6" stroke="#a97ce8" stroke-width="3.6"/>
  <path d="M514.6 22.6 L518.4 19.8 L520.6 41.8 L516.6 44.2 Z" fill="#7d55c0"/>
</g>
<use href="#vs" x="65"/>
<circle cx="510" cy="71.7" r="1.9" fill="#000"/>

<!-- Plastic SCM hexes -->
<g transform="translate(638.9 35.8)"><path d="M0.0 -30.0 L27.1 -15.0 L27.1 15.0 L0.0 30.0 L-27.1 15.0 L-27.1 -15.0 Z" fill="#ff3d0c"/><path d="M-27.1 -15.0 L0 0 L0.0 30.0 L-27.1 15.0 Z" fill="#dd1f07"/><path d="M0.0 -24.4 L22.1 -12.2 L22.1 12.2 L0.0 24.4 L0.0 18.4 L16.7 9.2 L16.7 -9.2 L0.0 -18.4 L-16.7 -9.2 L-16.7 12.6 L-22.1 9.6 L-22.1 -12.2 Z" fill="#fff"/><path d="M0.0 -13.1 L11.9 -6.5 L11.9 6.5 L0.0 13.1 L0.0 7.7 L7.0 3.8 L7.0 -3.8 L0.0 -7.7 L-7.0 -3.9 L-7.0 20.6 L-11.9 17.9 L-11.9 -6.6 Z" fill="#fff"/><path d="M0.0 -7.7 L7.0 -3.8 L0 0 L-7.0 -3.9 Z" fill="#ff4a14"/><path d="M-7.0 -3.9 L0 0 L0 7.7 L-7.0 3.8 Z" fill="#d01a04"/><path d="M7.0 -3.8 L0 0 L0 7.7 L7.0 3.8 Z" fill="#ff430e"/></g>
<circle cx="638.9" cy="71.7" r="1.9" fill="#000"/>
<g transform="translate(704.2 35.8)"><path d="M0.0 -30.0 L27.1 -15.0 L27.1 15.0 L0.0 30.0 L-27.1 15.0 L-27.1 -15.0 Z" fill="#1fa6d3"/><path d="M-27.1 -15.0 L0 0 L0.0 30.0 L-27.1 15.0 Z" fill="#1d5c9d"/><path d="M0.0 -30.0 L27.1 -15.0 L0 0 L-27.1 -15.0 Z" fill="#1b93c4"/><path d="M0.0 -24.4 L22.1 -12.2 L22.1 12.2 L0.0 24.4 L0.0 18.4 L16.7 9.2 L16.7 -9.2 L0.0 -18.4 L-16.7 -9.2 L-16.7 12.6 L-22.1 9.6 L-22.1 -12.2 Z" fill="#fff"/><path d="M0.0 -13.1 L11.9 -6.5 L11.9 6.5 L0.0 13.1 L0.0 7.7 L7.0 3.8 L7.0 -3.8 L0.0 -7.7 L-7.0 -3.9 L-7.0 20.6 L-11.9 17.9 L-11.9 -6.6 Z" fill="#fff"/><path d="M0.0 -7.7 L7.0 -3.8 L0 0 L-7.0 -3.9 Z" fill="#25b4de"/><path d="M-7.0 -3.9 L0 0 L0 7.7 L-7.0 3.8 Z" fill="#1a67a6"/><path d="M7.0 -3.8 L0 0 L0 7.7 L7.0 3.8 Z" fill="#20a4d2"/></g>

<rect x="751" y="9.7" width=".9" height="56.1" fill="#57321a"/>

<!-- Box (installer) -->
<g>
  <path d="M782.8 7.3 H794.7 L800.7 12.2 V19 H782.8 Z" fill="#f4f4f5"/><rect x="785" y="9.2" width="3.4" height="1.3" fill="#5a8fd0"/>
  <path d="M778.2 41 L794.3 52.9 V62.7 L778.2 51.2 Z" fill="#87501a"/>
  <path d="M794.3 52.9 L815.9 43.6 V52.9 L794.3 62.7 Z" fill="#8e551a"/>
  <path d="M778.2 36 L794.3 44 L815.9 35 V44.6 L794.3 53.4 L778.2 42 Z" fill="#7a4515"/>
  <path d="M774.8 14.7 Q779 18.6 784.5 18.1 Q792 16.6 796 10.1 Q799.4 15.6 805.7 16.4 Q813 16.6 818.5 13 L820.2 26.6 L815.1 33 L797.3 41.1 L779 30 L775.6 27.5 Z" fill="#fbd84a" opacity=".93"/>
  <path d="M776 16.6 Q779.4 19.8 784.5 19.4 Q789 18.6 793 15 L789 19.4 L779 22.8 L776.6 26 Z" fill="#fff6d8" opacity=".85"/>
  <path d="M779 22.8 L796.4 17.3 L815.1 24.9 L797.3 30.9 Z" fill="#fcdf5e"/>
  <path d="M787.9 27.3 L799 23.6 L804.9 26.4 L794.3 30.2 Z" fill="#e0b90c"/>
  <path d="M779 26.4 L787.9 27.3 L794.3 30.2 L804.9 26.4 L815.1 26.6 V32.8 L797.3 41.1 L779 30.4 Z" fill="#e6bf0c"/>
  <path d="M779 22.8 L787.9 27.3 L794.3 30.2 L797.3 30.9 L797.3 32.2 L779 26.6 Z" fill="#f3cf2a"/>
  <path d="M770.5 34.3 L777.7 30.9 L793 41.5 L785.4 45.7 Z" fill="#dfa56f"/>
  <path d="M794.3 41.9 L815.9 33.8 L820.6 41 L800.2 50.4 Z" fill="#d9962e"/>
  <path d="M815.1 22.4 L821.9 26.2 L818.1 33.4 L815.1 32.6 Z" fill="#f0c690"/>
</g>

<!-- minimized windows -->
<rect x="833.7" y="20.2" width="56.3" height="31.6" fill="#fdfdfd"/>
<rect x="833.7" y="20.2" width="56.3" height="1.6" fill="#dadada"/>
<g fill="#cfd3d6"><rect x="836" y="24" width="4" height="6" opacity=".4"/><rect x="878" y="23.4" width="10" height="9" opacity=".4"/><rect x="879" y="35" width="9" height="10" opacity=".3"/><rect x="843" y="23" width="32" height=".8" opacity=".7"/></g>
<rect x="842.4" y="36.4" width="12" height="1" fill="#7fd0c4"/><rect x="854.6" y="36.2" width="7" height="1.4" fill="#3f8fd0"/>
<rect x="842.4" y="41.6" width="10" height=".9" fill="#9fd8cf"/><rect x="866" y="42" width="2" height="1.6" fill="#3f8fd0"/><rect x="843" y="26" width="10" height="1.3" fill="#6aa6dc"/>
<g transform="translate(879.8 53.7) scale(0.36)"><path d="M0.0 -30.0 L27.1 -15.0 L27.1 15.0 L0.0 30.0 L-27.1 15.0 L-27.1 -15.0 Z" fill="#f5330c"/><path d="M0.0 -24.4 L22.1 -12.2 L22.1 12.2 L0.0 24.4 L0.0 18.4 L16.7 9.2 L16.7 -9.2 L0.0 -18.4 L-16.7 -9.2 L-16.7 12.6 L-22.1 9.6 L-22.1 -12.2 Z" fill="#fff"/><path d="M0.0 -13.1 L11.9 -6.5 L11.9 6.5 L0.0 13.1 L0.0 7.7 L7.0 3.8 L7.0 -3.8 L0.0 -7.7 L-7.0 -3.9 L-7.0 20.6 L-11.9 17.9 L-11.9 -6.6 Z" fill="#fff"/><path d="M0.0 -7.7 L7.0 -3.8 L7.0 3.8 L0.0 7.7 L-7.0 3.8 L-7.0 -3.9 Z" fill="#f5330c"/></g>
<rect x="898" y="23.8" width="56" height="24.2" fill="#fcfcfc"/>
<rect x="898" y="23.8" width="7.4" height="24.2" fill="#34343c"/><rect x="898.6" y="24.4" width="3.4" height="1.2" fill="#8a62d8"/><rect x="902.6" y="27" width="1.6" height="9" fill="#6a4fb0" opacity=".7"/>
<g fill="#b9bcc2"><rect x="907" y="26.4" width="14" height=".8"/><rect x="908" y="28.6" width="10" height=".8"/><rect x="908" y="30.8" width="20" height=".8"/><rect x="908" y="33" width="16" height=".8"/><rect x="907" y="35.2" width="9" height=".8"/><rect x="908" y="37.4" width="13" height=".8"/><rect x="908" y="39.6" width="10" height=".8"/><rect x="907" y="41.8" width="8" height=".8"/><rect x="930" y="26" width="6" height=".8"/></g>
<g transform="translate(944.2 53.6) rotate(-14) scale(.9)">
  <rect x="-8.4" y="-8.4" width="16.8" height="16.8" rx="1.6" fill="#fff"/>
  <path d="M-8.4 -8.4 H-1 L-3.4 -2.8 L-8.4 -1 Z" fill="#9fd6d2"/><path d="M-1 -8.4 H8.4 V-3 L2.6 -3.4 Z" fill="#e6b52c"/>
  <path d="M8.4 -3 V8.4 H3 L3.4 2.4 Z" fill="#e0541e"/><path d="M3 8.4 H-8.4 V3 L-2.6 2.8 Z" fill="#35a57c"/><path d="M-8.4 3 V-1 L-3.6 -2 L-3.2 2.6 Z" fill="#2a7a5a"/>
  <rect x="-4.6" y="-4.8" width="9.4" height="9.6" fill="#fff"/>
</g>
<text x="944.2" y="57.2" font-size="10" font-weight="bold" fill="#111" text-anchor="middle">S</text>
<rect x="961" y="16.6" width="40" height="38.6" rx="2.4" fill="#c9c9cc"/>
<rect x="961.9" y="17.5" width="40" height="36.8" rx="1.8" fill="#0d0d0f"/>
<rect x="963.7" y="19.3" width="40" height="33.2" fill="#fefefe"/>
<g fill="#8c8c90"><rect x="965" y="20.6" width="26" height=".9"/><rect x="965" y="22.6" width="31" height=".9" opacity=".7"/><rect x="965" y="24.6" width="12" height=".9" opacity=".6"/></g>
</svg>

</div>
</body>
</html>
